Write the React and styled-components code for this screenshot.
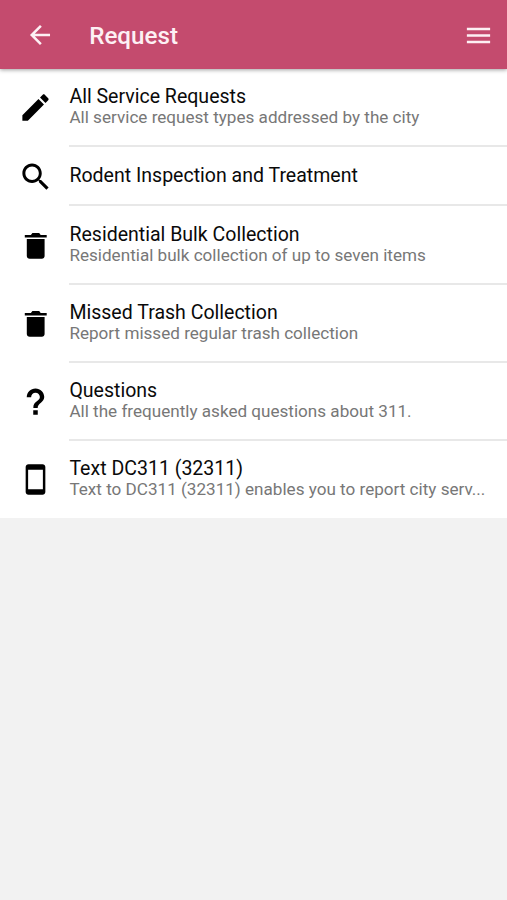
import React from "react";
import styled, { createGlobalStyle } from "styled-components";
import {
  IoMdArrowBack,
  IoMdMenu,
  IoMdCreate,
  IoMdSearch,
  IoMdHelp,
  IoMdPhonePortrait,
} from "react-icons/io";

const GlobalStyle = createGlobalStyle`
  * { box-sizing: border-box; }
  body { margin: 0; background: #f2f2f2; font-family: Roboto, sans-serif; }
`;

const Screen = styled.main`
  min-height: 900px;
  background: #f2f2f2;
`;

const Toolbar = styled.header`
  position: relative;
  display: flex;
  align-items: center;
  height: 69px;
  padding: 1px 13px 0 25px;
  background: #c44b6e;
  color: #fdf0f4;
  box-shadow: 0 1px 4px rgba(0, 0, 0, 0.38);
`;

const IconButton = styled.button`
  display: flex;
  padding: 0;
  border: 0;
  background: none;
  color: inherit;
`;

const Title = styled.h1`
  flex: 1;
  margin: 1px 0 0 34.2px;
  font-size: 24.2px;
  line-height: 32px;
  font-weight: 500;
`;

const List = styled.ul`
  margin: 0;
  padding: 0;
  list-style: none;
  background: #fff;
`;

const Row = styled.li`
  display: flex;
  height: ${(p) => p.$height}px;
`;

const IconCell = styled.div`
  display: flex;
  align-items: center;
  justify-content: center;
  width: 70px;
  padding-bottom: 1px;
  flex: none;
  color: #000;
`;

const Content = styled.div`
  display: flex;
  flex: 1;
  min-width: 0;
  flex-direction: column;
  justify-content: center;
  margin-left: -0.6px;
  padding: 0 16px ${(p) => (p.$last ? 1 : 0)}px 0;
  border-bottom: ${(p) => (p.$last ? 0 : 2)}px solid #e8e8e8;
`;

const Label = styled.div`
  font-size: 19.55px;
  line-height: 22px;
  color: #0a0a0a;
`;

const Detail = styled.div`
  margin: -1px 0 1px;
  font-size: 17.1px;
  line-height: 20px;
  color: #777;
  white-space: nowrap;
`;

const TrashIcon = () => (
  <svg width="35" height="35" viewBox="0 0 35 35" fill="currentColor">
    <path d="M6.8 7.1h6.1l1.5-2.2h6.8l1.5 2.2h6v2.3H6.8z" />
    <path d="M8.8 11h17.8v17c0 1.6-1.2 2.8-2.8 2.8H11.6c-1.6 0-2.8-1.2-2.8-2.8z" />
  </svg>
);

const items = [
  { icon: <IoMdCreate size={35} />, label: "All Service Requests", detail: "All service request types addressed by the city", height: 78 },
  { icon: <IoMdSearch size={35} />, label: "Rodent Inspection and Treatment", height: 59 },
  { icon: <TrashIcon />, label: "Residential Bulk Collection", detail: "Residential bulk collection of up to seven items", height: 79 },
  { icon: <TrashIcon />, label: "Missed Trash Collection", detail: "Report missed regular trash collection", height: 78 },
  { icon: <IoMdHelp size={35} />, label: "Questions", detail: "All the frequently asked questions about 311.", height: 78 },
  { icon: <IoMdPhonePortrait size={35} />, label: "Text DC311 (32311)", detail: "Text to DC311 (32311) enables you to report city serv...", height: 77 },
];

export default function App() {
  return (
    <Screen>
      <GlobalStyle />
      <Toolbar>
        <IconButton aria-label="Back"><IoMdArrowBack size={30} /></IconButton>
        <Title>Request</Title>
        <IconButton aria-label="Menu"><IoMdMenu size={31} /></IconButton>
      </Toolbar>
      <List>
        {items.map((item, i) => (
          <Row key={item.label} $height={item.height}>
            <IconCell>{item.icon}</IconCell>
            <Content $last={i === items.length - 1}>
              <Label>{item.label}</Label>
              {item.detail && <Detail>{item.detail}</Detail>}
            </Content>
          </Row>
        ))}
      </List>
    </Screen>
  );
}
